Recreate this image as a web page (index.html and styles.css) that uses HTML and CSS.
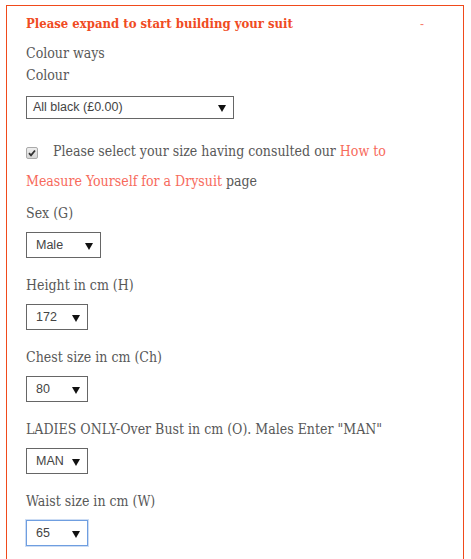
FILE: index.html
```html
<!DOCTYPE html>
<html>
<head>
<meta charset="utf-8">
<link rel="stylesheet" href="styles.css">
</head>
<body>
<div class="panel">
  <div class="panel-head">
    <span class="panel-title">Please expand to start building your suit</span>
    <span class="panel-toggle">-</span>
  </div>
  <div class="line">Colour ways</div>
  <div class="line">Colour</div>
  <div class="sel sel-wide">All black (£0.00)</div>

  <div class="consent">
    <span class="check"><svg width="8" height="8" viewBox="0 0 8 8"><path d="M1 4.2 L3 6.3 L7 1.5" fill="none" stroke="#333" stroke-width="1.8"/></svg></span>Please select your size having consulted our <a class="link">How to Measure Yourself for a Drysuit</a> page
  </div>

  <div class="field">
    <div class="label">Sex (G)</div>
    <div class="sel sel-sex">Male</div>
  </div>
  <div class="field">
    <div class="label">Height in cm (H)</div>
    <div class="sel">172</div>
  </div>
  <div class="field">
    <div class="label">Chest size in cm (Ch)</div>
    <div class="sel">80</div>
  </div>
  <div class="field">
    <div class="label">LADIES ONLY-Over Bust in cm (O). Males Enter "MAN"</div>
    <div class="sel">MAN</div>
  </div>
  <div class="field">
    <div class="label">Waist size in cm (W)</div>
    <div class="sel sel-focus">65</div>
  </div>
</div>
</body>
</html>
```

FILE: styles.css
```css
html, body {
  margin: 0;
  padding: 0;
  background: #fff;
}
body {
  font-family: "DejaVu Serif Condensed", "DejaVu Serif", serif;
  font-stretch: condensed;
  color: #585858;
  overflow: hidden;
}
.panel {
  margin: 5px 0 0 6px;
  width: 458px;
  height: 600px;
  box-sizing: border-box;
  border: 1px solid #f04a1b;
  padding: 8px 0 0 19px;
}
.panel-head {
  display: flex;
  justify-content: space-between;
  height: 20px;
  line-height: 20px;
  padding-right: 39px;
}
.panel-title {
  font-size: 13px;
  font-weight: bold;
  color: #f04b23;
}
.panel-toggle {
  font-family: "Liberation Sans", sans-serif;
  font-size: 12px;
  color: #f77a6b;
}
.line {
  font-size: 14px;
  line-height: 22px;
}
.panel-head + .line {
  margin-top: 8px;
}
.sel {
  position: relative;
  box-sizing: border-box;
  width: 62px;
  height: 26px;
  border: 1px solid #666;
  font-family: "Liberation Sans", Arial, sans-serif;
  font-stretch: normal;
  font-size: 12.5px;
  color: #444;
  line-height: 24px;
  padding-left: 9px;
}
.sel::after {
  content: "";
  position: absolute;
  right: 7px;
  top: 10px;
  border-left: 4px solid transparent;
  border-right: 4px solid transparent;
  border-top: 7px solid #111;
}
.sel-wide {
  width: 208px;
  height: 23px;
  line-height: 21px;
  padding-left: 6px;
  margin-top: 10px;
}
.sel-wide::after {
  top: 8px;
  right: 7px;
}
.sel-sex {
  width: 75px;
}
.sel-focus {
  border-color: #6f9ee0;
  box-shadow: 0 0 0 1px rgba(111, 158, 224, 0.35);
}
.consent {
  margin-top: 17px;
  font-size: 14px;
  line-height: 30px;
  width: 390px;
}
.check {
  display: inline-flex;
  align-items: center;
  justify-content: center;
  box-sizing: border-box;
  width: 12px;
  height: 12px;
  border: 1px solid #aaa;
  border-radius: 2px;
  background: linear-gradient(#eee, #d6d6d6);
  margin-right: 15px;
  vertical-align: -1px;
}
.link {
  color: #f76a5c;
  text-decoration: none;
}
.field {
  margin-top: 16px;
}
.consent + .field {
  margin-top: 6px;
}
.label {
  font-size: 14px;
  line-height: 22px;
  margin-bottom: 8px;
}
```
